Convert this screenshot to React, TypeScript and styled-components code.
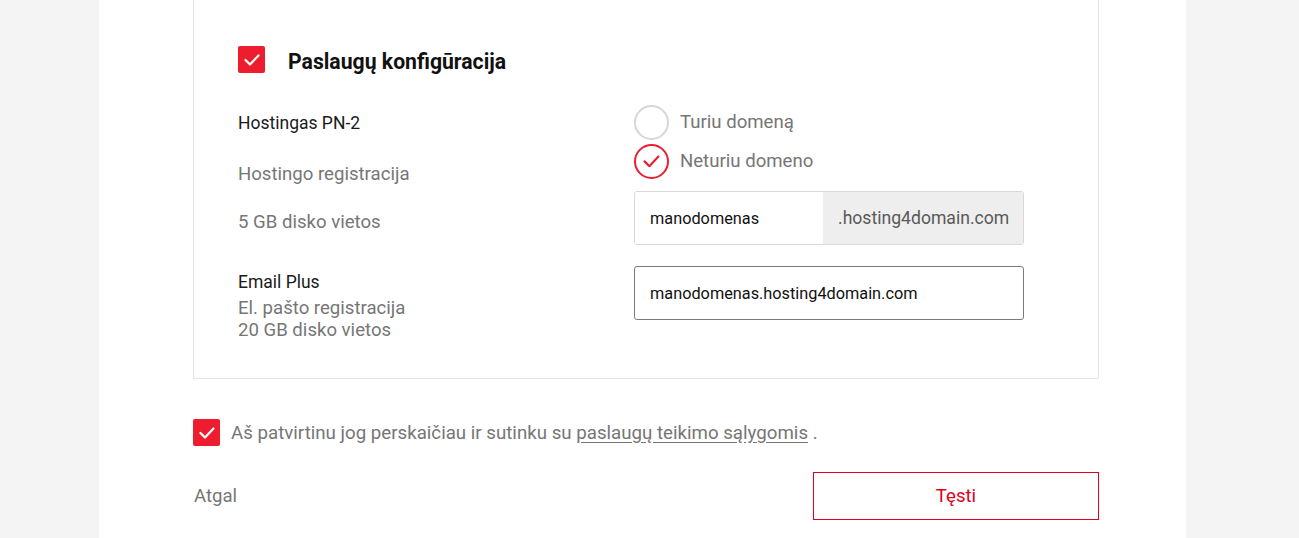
import React, { useEffect, useRef, useState } from 'react';
import styled, { createGlobalStyle } from 'styled-components';

const red = '#ed1c2e';

const GlobalStyle = createGlobalStyle`
  html, body {
    margin: 0;
    padding: 0;
    background: #f4f4f4;
    font-family: Roboto, 'Liberation Sans', Arial, sans-serif;
  }
`;

const Page = styled.div`
  width: 1087px;
  min-height: 538px;
  margin-left: 99px;
  background: #fff;
  box-sizing: border-box;
  padding-left: 94px;
`;

const Content = styled.div`
  width: 906px;
`;

const Card = styled.section`
  border: 1px solid #e5e5e5;
  border-top: none;
  padding: 46px 44px 37px 44px;
`;

const TitleRow = styled.div`
  display: flex;
  align-items: center;
  gap: 23px;
  height: 27px;
`;

const Title = styled.h2`
  margin: 0;
  font-size: 21.2px;
  font-weight: 700;
  color: #111;
  padding-top: 3px;
`;

const Box = styled.span<{ size?: number }>`
  display: inline-flex;
  align-items: center;
  justify-content: center;
  flex: none;
  width: ${({ size }) => size ?? 27}px;
  height: ${({ size }) => size ?? 27}px;
  border-radius: 2px;
  background: ${red};
`;

const Body = styled.div`
  display: grid;
  grid-template-columns: 396px 390px;
  margin-top: 32px;
`;

const LeftCol = styled.div`
  display: flex;
  flex-direction: column;
  padding-top: 6px;
`;

const RightCol = styled.div`
  display: flex;
  flex-direction: column;
`;

const ItemName = styled.div`
  font-size: 17.5px;
  line-height: 24px;
  color: #1a1a1a;
`;

const Detail = styled.div<{ gap?: number }>`
  font-size: 18.6px;
  line-height: 24px;
  color: #767676;
  margin-top: ${({ gap }) => gap ?? 0}px;
`;

const SubDetail = styled.div<{ gap?: number }>`
  font-size: 18.6px;
  line-height: 22px;
  color: #767676;
  margin-top: ${({ gap }) => gap ?? 0}px;
`;

const ItemGroup = styled.div`
  margin-top: 36px;
  display: flex;
  flex-direction: column;
`;

const RadioRow = styled.label<{ gap?: number }>`
  display: flex;
  align-items: center;
  gap: 11px;
  height: 34px;
  margin-top: ${({ gap }) => gap ?? 0}px;
  font-size: 18.6px;
  color: #767676;
  cursor: pointer;
`;

const RadioCircle = styled.span<{ checked: boolean }>`
  display: inline-flex;
  align-items: center;
  justify-content: center;
  box-sizing: border-box;
  width: 35px;
  height: 35px;
  border-radius: 50%;
  border: 2px solid ${({ checked }) => (checked ? red : '#d6d6d6')};
`;

const SplitInput = styled.div`
  display: flex;
  height: 54px;
  margin-top: 13px;
  border: 1px solid #d9d9d9;
  border-radius: 3px;
  overflow: hidden;
  box-sizing: border-box;
`;

const Field = styled.input`
  flex: 1;
  min-width: 0;
  border: none;
  outline: none;
  padding: 0 15px;
  font-family: inherit;
  font-size: 16.3px;
  color: #111;
  background: #fff;
`;

const Suffix = styled.span`
  display: flex;
  align-items: center;
  box-sizing: border-box;
  width: 200px;
  padding-left: 15px;
  background: #eeeeee;
  font-size: 17.6px;
  color: #595959;
`;

const FullInput = styled.input`
  height: 54px;
  margin-top: 21px;
  box-sizing: border-box;
  border: 1px solid #7a7a7a;
  border-radius: 3px;
  padding: 0 15px;
  font-family: inherit;
  font-size: 16.3px;
  color: #111;
  outline: none;
  caret-color: #111;
`;

const Agree = styled.label`
  display: flex;
  align-items: center;
  gap: 11px;
  margin-top: 40px;
  font-size: 18.7px;
  color: #767676;
`;

const TermsLink = styled.a`
  color: #767676;
  text-decoration: underline;
  text-underline-offset: 3px;
`;

const Actions = styled.div`
  display: flex;
  justify-content: space-between;
  align-items: center;
  margin-top: 26px;
`;

const BackLink = styled.a`
  font-size: 18.6px;
  color: #767676;
  padding-left: 1px;
  text-decoration: none;
`;

const NextButton = styled.button`
  width: 286px;
  height: 48px;
  border: 1px solid #e2001a;
  background: #fff;
  color: #e2001a;
  font-family: inherit;
  font-size: 18.6px;
  cursor: pointer;
`;

const Check = ({ color = '#fff', w = 16, sw = 2.4 }: { color?: string; w?: number; sw?: number }) => (
  <svg width={w} height={w * 0.75} viewBox="0 0 16 12" fill="none">
    <path d="M1.5 6 L6 10.5 L14.5 1.5" stroke={color} strokeWidth={sw} strokeLinecap="round" strokeLinejoin="round" />
  </svg>
);

export default function App() {
  const [hasDomain, setHasDomain] = useState(false);
  const fullRef = useRef<HTMLInputElement>(null);

  useEffect(() => {
    const el = fullRef.current;
    if (el) {
      el.focus();
      el.setSelectionRange(el.value.length, el.value.length);
    }
  }, []);

  return (
    <>
      <GlobalStyle />
      <Page>
        <Content>
          <Card>
            <TitleRow>
              <Box>
                <Check sw={2.2} />
              </Box>
              <Title>Paslaugų konfigūracija</Title>
            </TitleRow>
            <Body>
              <LeftCol>
                <ItemName>Hostingas PN-2</ItemName>
                <Detail gap={27}>Hostingo registracija</Detail>
                <Detail gap={24}>5 GB disko vietos</Detail>
                <ItemGroup>
                  <ItemName>Email Plus</ItemName>
                  <SubDetail gap={3}>El. pašto registracija</SubDetail>
                  <SubDetail>20 GB disko vietos</SubDetail>
                </ItemGroup>
              </LeftCol>
              <RightCol>
                <RadioRow onClick={() => setHasDomain(true)}>
                  <RadioCircle checked={hasDomain}>{hasDomain && <Check color={red} w={17} sw={2} />}</RadioCircle>
                  Turiu domeną
                </RadioRow>
                <RadioRow gap={5} onClick={() => setHasDomain(false)}>
                  <RadioCircle checked={!hasDomain}>{!hasDomain && <Check color={red} w={17} sw={2} />}</RadioCircle>
                  Neturiu domeno
                </RadioRow>
                <SplitInput>
                  <Field defaultValue="manodomenas" />
                  <Suffix>.hosting4domain.com</Suffix>
                </SplitInput>
                <FullInput ref={fullRef} defaultValue="manodomenas.hosting4domain.com" />
              </RightCol>
            </Body>
          </Card>
          <Agree>
            <Box>
              <Check sw={2.2} />
            </Box>
            <span>
              Aš patvirtinu jog perskaičiau ir sutinku su <TermsLink href="#">paslaugų teikimo sąlygomis</TermsLink> .
            </span>
          </Agree>
          <Actions>
            <BackLink href="#">Atgal</BackLink>
            <NextButton>Tęsti</NextButton>
          </Actions>
        </Content>
      </Page>
    </>
  );
}
